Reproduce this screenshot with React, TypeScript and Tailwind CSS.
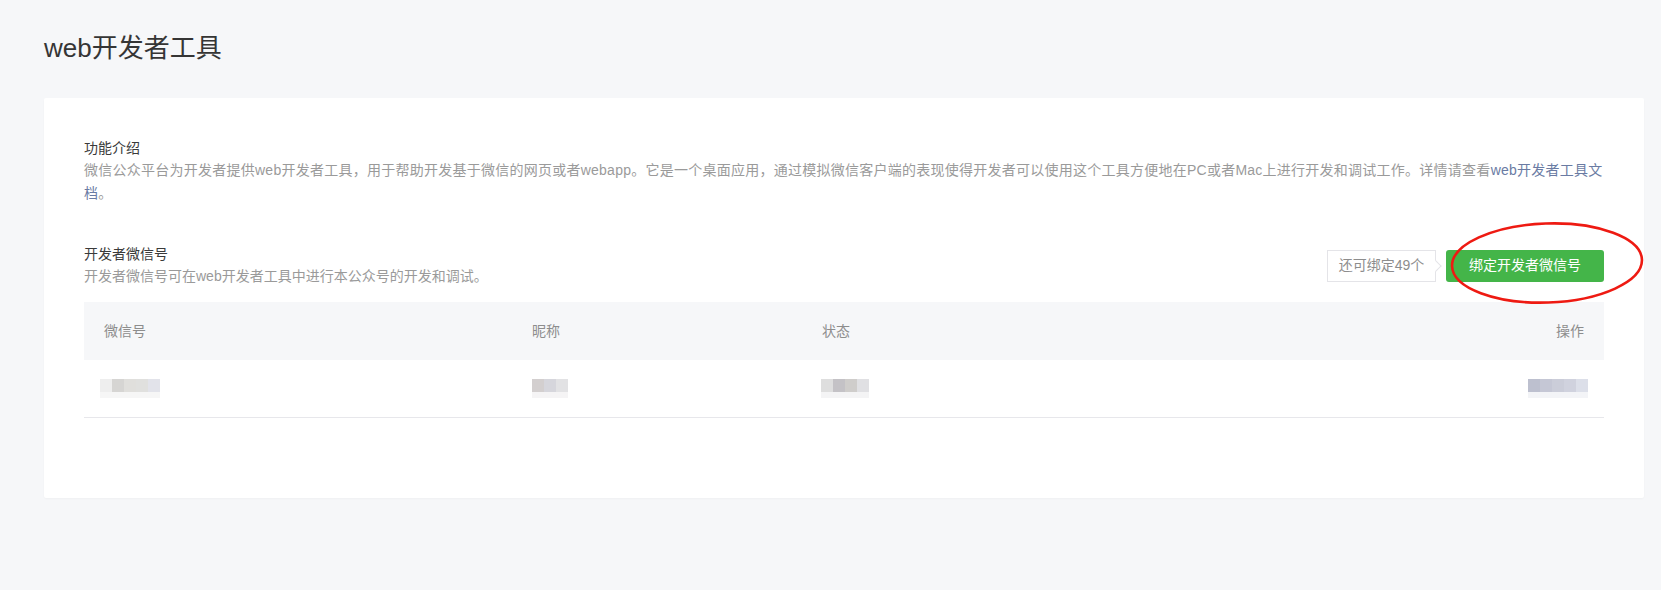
import React from "react";

const FONT = { fontFamily: '"Liberation Sans", "Noto Sans CJK SC", sans-serif' };

function Mosaic({ top, bottom, cell = 12 }: { top: string[]; bottom: string; cell?: number }) {
  return (
    <div className="flex flex-col">
      <div className="flex">
        {top.map((c, i) => (
          <div key={i} style={{ backgroundColor: c, width: cell }} className="h-[13px]" />
        ))}
      </div>
      <div style={{ backgroundColor: bottom, width: cell * top.length }} className="h-[6px]" />
    </div>
  );
}

export default function App() {
  return (
    <div className="min-h-[590px] w-full bg-[#f6f7f9] pl-[44px] pr-[17px] pt-[30px] pb-[40px] text-[14px]" style={FONT}>
      <h1 className="text-[26px] leading-[36px] font-normal text-[#353535]">web开发者工具</h1>

      <div className="mt-[32px] bg-white px-10 pt-[39px] pb-[80px] rounded-[2px] shadow-[0_1px_2px_rgba(0,0,0,0.03)]">
        {/* Section 1 */}
        <div>
          <div className="leading-[22px] text-[#3a3a3a]">功能介绍</div>
          <p className="leading-[23px] text-[#9a9a9a] tracking-[0.25px]">
            微信公众平台为开发者提供web开发者工具，用于帮助开发基于微信的网页或者webapp。它是一个桌面应用，通过模拟微信客户端的表现使得开发者可以使用这个工具方便地在PC或者Mac上进行开发和调试工作。详情请查看
            <span className="text-[#6a7ba3]">web开发者工具文档</span>。
          </p>
        </div>

        {/* Section 2 */}
        <div className="mt-[38px] flex items-center justify-between">
          <div>
            <div className="leading-[22px] text-[#3a3a3a]">开发者微信号</div>
            <div className="leading-[23px] text-[#9a9a9a]">开发者微信号可在web开发者工具中进行本公众号的开发和调试。</div>
          </div>
          <div className="flex items-center">
            <div className="relative flex h-[32px] w-[109px] items-center justify-center border border-[#e4e4e8] bg-white text-[#8d8d8d]">
              还可绑定49个
              <span className="absolute right-[-5px] top-1/2 h-[8px] w-[8px] -translate-y-1/2 rotate-45 border-r border-t border-[#e4e4e8] bg-white" />
            </div>
            <div className="relative ml-[10px]">
              <button className="flex h-[32px] w-[158px] items-center justify-center rounded-[3px] bg-[#44b549] text-white">
                绑定开发者微信号
              </button>
              <svg
                className="pointer-events-none absolute left-[3px] top-[-29px]"
                width="196"
                height="84"
                viewBox="0 0 196 84"
              >
                <ellipse
                  cx="98"
                  cy="42"
                  rx="95"
                  ry="39.5"
                  fill="none"
                  stroke="#ee1a12"
                  strokeWidth="2.6"
                  transform="rotate(-2 98 42)"
                />
              </svg>
            </div>
          </div>
        </div>

        {/* Table */}
        <div className="mt-[14px]">
          <div className="grid h-[58px] grid-cols-[428px_290px_1fr_auto] items-center bg-[#f6f7f9] px-5 text-[#8d8d8d]">
            <div>微信号</div>
            <div>昵称</div>
            <div>状态</div>
            <div className="text-right">操作</div>
          </div>
          <div className="grid h-[58px] grid-cols-[428px_290px_1fr_auto] items-center border-b border-[#e7e7eb] px-5">
            <div className="-ml-1">
              <Mosaic top={["#eeeeee", "#d6d5d3", "#e0dfdc", "#e0e0de", "#e2e3ea"]} bottom="#f6f6f6" />
            </div>
            <div>
              <Mosaic top={["#d3cfcf", "#d6d6dc", "#e2e2e4"]} bottom="#f5f4f5" />
            </div>
            <div className="-ml-px">
              <Mosaic top={["#dedede", "#c4c2c6", "#cfcdcb", "#e0e0e3"]} bottom="#f4f4f5" />
            </div>
            <div className="flex justify-end -mr-1">
              <Mosaic top={["#bdc0cf", "#c5c7d5", "#cbcdd9", "#d0d2de", "#dcdfe9"]} bottom="#f3f4f7" />
            </div>
          </div>
        </div>
      </div>
    </div>
  );
}
